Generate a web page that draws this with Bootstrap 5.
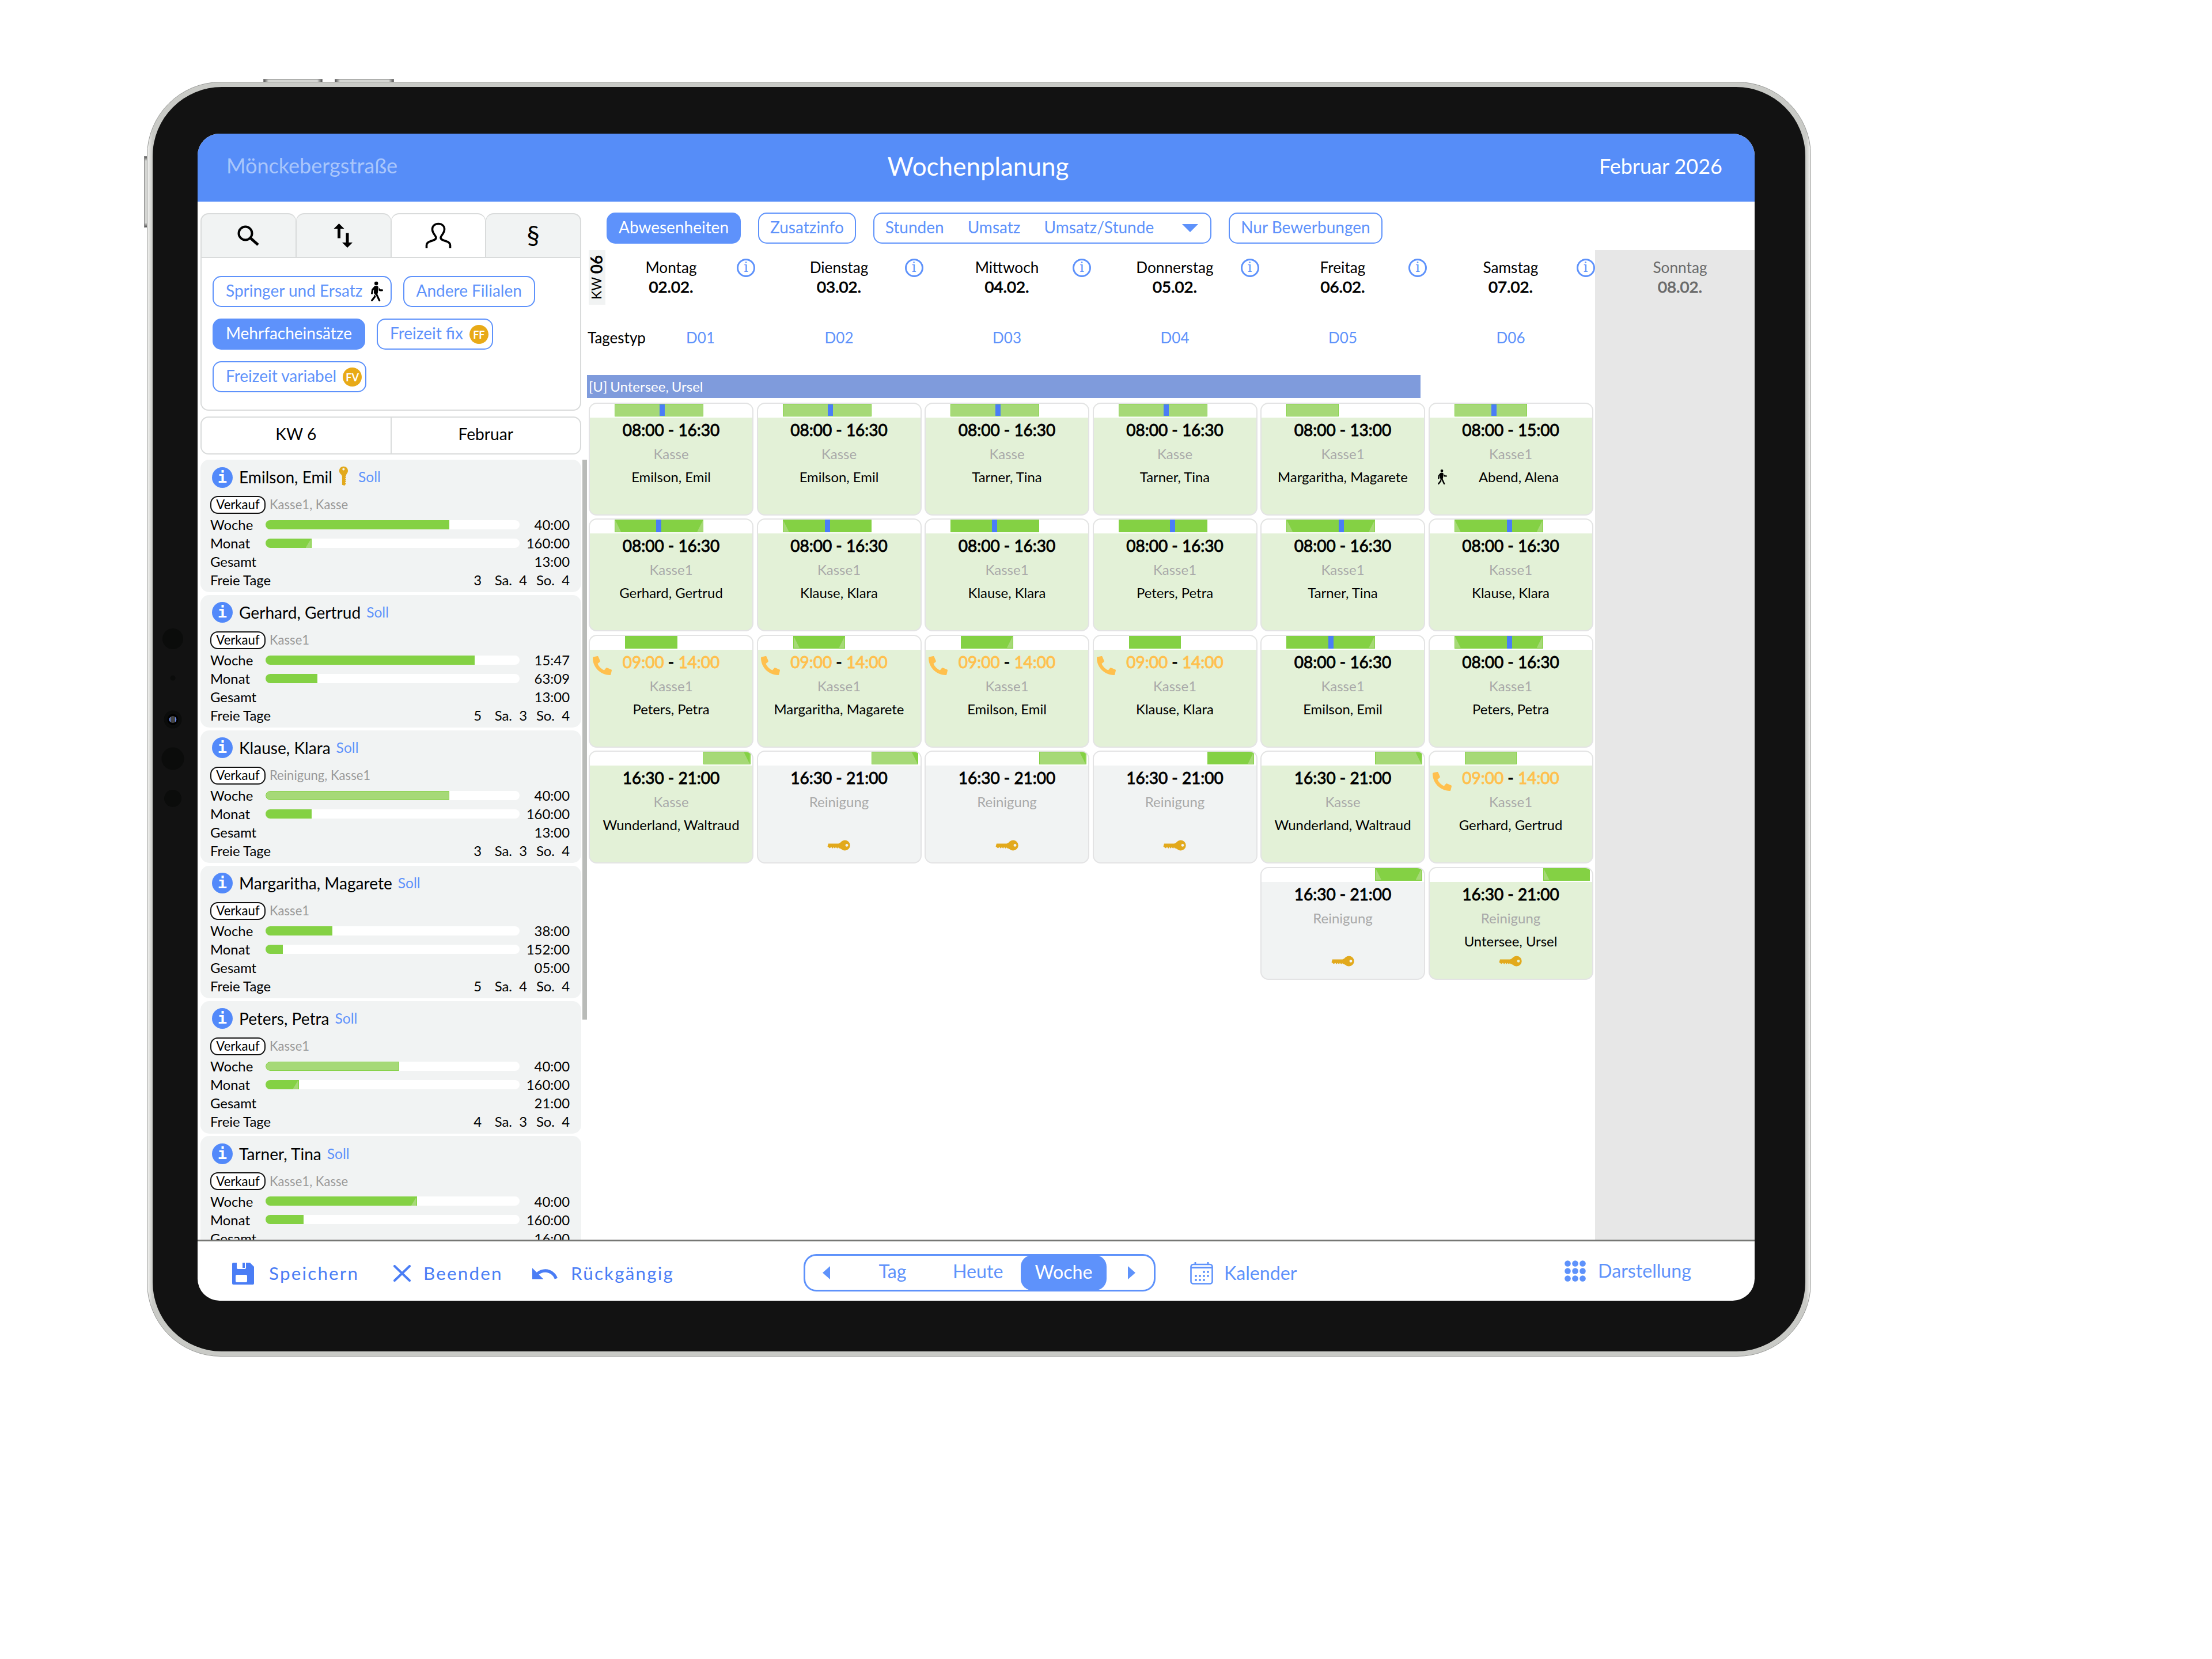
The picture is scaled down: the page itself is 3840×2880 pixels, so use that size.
<!DOCTYPE html>
<html lang="de">
<head>
    <meta charset="UTF-8">
    <meta name="viewport" content="width=device-width, initial-scale=1.0">
    <title>Wochenplanung</title>
    <link rel="stylesheet" href="https://cdn.jsdelivr.net/npm/bootstrap@5.3.0/dist/css/bootstrap.min.css">
    <style>
        :root {
            --blue: #5e92fb;
            --green: #84d144;
            --green-soft: #a6d977;
        }

        body {
            background: #fff;
            color: #000;
            font-family: Lato, "Liberation Sans", sans-serif;
            line-height: 1;
            overflow: hidden;
            padding: 142px 0 0 255px;
        }

        svg { display: block; flex: none; }

        /* Tablet */
        .tablet {
            position: relative;
            width: 2889px;
            height: 2213px;
            padding: 8px 9px;
            border: 1px solid #9a9b99;
            border-radius: 128px;
            background: linear-gradient(90deg, #f2f2f0, #c9cac6 9px, #c9cac6 2879px, #f2f2f0);
        }

        .bezel {
            height: 100%;
            background: #121212;
            border-radius: 120px;
            padding: 81px 88px 88px 78px;
        }

        .hw-btn {
            position: absolute;
            background: linear-gradient(90deg, #555, #d5d6d3 8%, #d5d6d3 92%, #555);
            border: 1px solid #888;
            z-index: -1;
        }
        .hw-top { top: -6px; width: 103px; height: 8px; }
        .hw-side { left: -6px; top: 128px; width: 8px; height: 124px; background: linear-gradient(#555, #d5d6d3 6%, #d5d6d3 94%, #555); }

        .sensors { position: absolute; left: 24px; top: 944px; }

        .screen {
            height: 100%;
            background: #fff;
            border-radius: 38px;
            overflow: hidden;
        }

        /* Header */
        .topbar {
            height: 118px;
            padding: 0 56px 7px 50px;
            background: #568df8;
            color: #fff;
        }
        .topbar > * { flex: 1 1 0; }
        .topbar .branch { font-size: 36.1px; color: #a9c6fb; }
        .topbar .title { font-size: 44px; padding-left: 13px; }
        .topbar .month { font-size: 36px; }

        /* Sidebar */
        .side { width: 676px; padding: 20px 0 0 5px; }
        .side-inner { width: 661px; }

        .tabs { height: 78px; }
        .tabs .tab {
            flex: 1;
            background: #f1f3f3;
            border: 2px solid #d9dbdb;
            border-left-width: 1px;
            border-right-width: 1px;
            border-radius: 14px 14px 0 0;
        }
        .tabs .tab.on { background: #fff; }
        .tabs .tab:first-child { border-left-width: 2px; }
        .tabs .tab:last-child { border-right-width: 2px; }
        .para { font-size: 45px; margin-top: -4px; }

        .filters {
            height: 265px;
            padding: 31px 19px 0;
            border: 2px solid #d9dbdb;
            border-top: 0;
            border-radius: 0 0 14px 14px;
            gap: 20px;
        }

        .pill {
            height: 54px;
            padding: 0 21px 5px;
            border: 2px solid var(--blue);
            border-radius: 15px;
            background: #fff;
            color: var(--blue);
            font-size: 28px;
            line-height: 1;
            white-space: nowrap;
        }
        .pill.on { background: var(--blue); color: #fff; }
        .pill.with-dot { padding-right: 6px; }
        .pill.with-icon { padding-right: 13px; }
        .pill .dot {
            width: 33px;
            height: 33px;
            margin: 6px 0 0 11px;
            border-radius: 50%;
            background: #e8aa17;
            color: #fff;
            font-size: 18px;
            font-weight: 700;
        }

        .period {
            height: 66px;
            margin-top: 10px;
            border: 2px solid #d9dbdb;
            border-radius: 14px;
            font-size: 28.2px;
        }
        .period > div { flex: 1; padding-bottom: 6px; }
        .period > div + div { border-left: 2px solid #d9dbdb; }

        .staff { height: 1354px; margin-top: 9px; overflow: hidden; }
        .person {
            flex: none;
            height: 230.4px;
            margin-bottom: 4.5px;
            padding: 11px 20px 0 17px;
            background: #f1f3f3;
            border-radius: 15px;
            font-size: 23.9px;
        }
        .info {
            width: 36px;
            height: 36px;
            margin-left: 3px;
            border-radius: 50%;
            background: #5289fa;
            color: #fff;
            font: 700 27px/36px "DejaVu Sans Mono", monospace;
            text-align: center;
        }
        .who { height: 39px; }
        .who .nm { font-size: 28.1px; margin-left: 11px; }
        .who .soll { font-size: 24.6px; color: var(--blue); margin-left: 10px; }
        .skills { height: 31px; margin-top: 13px; font-size: 22.1px; color: #999; }
        .skills .dept {
            width: 96px;
            height: 31px;
            margin-right: 7px;
            border: 2px solid #111;
            border-radius: 13px;
            background: #fff;
            color: #000;
        }
        .line { height: 32px; }
        .line .lbl { width: 95.5px; }
        .line .progress { width: 441px; height: 16px; border-radius: 8px; background: #fff; }
        .line .progress-bar { background: var(--green); position: relative; }
        .progress-bar.soft { background: var(--green-soft); border: 1px solid var(--green); border-radius: 8px 0 0 8px; }
        .progress-bar.cut::after {
            content: "";
            position: absolute;
            right: 1px;
            top: 1px;
            width: 9px;
            height: 15px;
            background: var(--green-soft);
            clip-path: polygon(100% 0, 100% 100%, 0 100%);
        }
        .free span { text-align: right; }

        .thumb { width: 8px; height: 972px; margin: 428px 0 0 2px; background: #b9bbb8; }

        /* Week */
        .tools { height: 84px; padding: 19px 0 0 34px; gap: 30px; }
        .tools .pill { padding-left: 19px; padding-right: 19px; }
        .tools .group { gap: 41px; padding-right: 21px; }

        .week { padding-left: 3px; width: 1750px; }
        .days {
            display: grid;
            grid-template-columns: repeat(6, 286px);
            column-gap: 5.5px;
        }
        .day { position: relative; height: 111px; padding-top: 13px; text-align: center; font-size: 26.2px; line-height: 34px; }
        .day b { font-size: 27.600px; }
        .day b, .time { font-weight: 400; -webkit-text-stroke: 0.9px currentColor; }
        .day .ring {
            position: absolute;
            right: -3px;
            top: 15px;
            width: 32px;
            height: 32px;
            border: 3px solid var(--blue);
            border-radius: 50%;
            color: var(--blue);
            font: 24px/25px "DejaVu Serif", serif;
        }
        .kw {
            position: absolute;
            left: 0;
            top: 0;
            width: 29px;
            height: 95px;
            background: #f1f3f3;
            writing-mode: vertical-rl;
            transform: rotate(180deg);
            text-align: center;
            font-size: 23px;
            line-height: 27px;
        }
        .kw b { font-size: 28px; font-weight: 700; -webkit-text-stroke: 0; }

        .types { height: 82px; font-size: 26px; color: var(--blue); }
        .types .first { padding-right: 67px; margin-left: -2px; }
        .absence {
            width: 1447px;
            height: 40px;
            margin: 24px 0 8px -3px;
            padding: 0 0 1px 3px;
            background: #7f9bdc;
            color: #fff;
            font-size: 24px;
            word-spacing: -1.2px;
        }
        .shifts { row-gap: 5.4px; }
        .shift {
            position: relative;
            height: 196px;
            border: 2px solid #e3e3e4;
            border-radius: 14px;
            background: #f1f3f3;
            overflow: hidden;
            text-align: center;
        }
        .shift.set { background: #e3f1d7; }
        .strip { height: 24px; background: #fff; }
        .span { position: relative; height: 22px; background: var(--green); }
        .span.soft { background: var(--green-soft); border: 1px solid var(--green); }
        .span.cut-l::before, .span.cut-r::after {
            content: "";
            position: absolute;
            top: 1px;
            bottom: 1px;
            width: 10px;
            background: var(--green-soft);
        }
        .span.cut-l::before { left: 1px; clip-path: polygon(0 0, 100% 100%, 0 100%); }
        .span.cut-r::after { right: 1px; clip-path: polygon(100% 0, 100% 100%, 0 100%); }
        .span.soft.cut-r::after { background: var(--green); right: 0; top: 0; bottom: 0; clip-path: polygon(0 0, 100% 0, 100% 100%); }
        .pause { position: absolute; top: 0; bottom: 0; width: 9px; background: #4a7df7; }

        .time { height: 42px; line-height: 42px; font-size: 28px; }
        .time .open { color: #ffc04d; }
        .role { height: 41px; line-height: 41px; font-size: 24px; color: #a9a9a9; }
        .emp { height: 40px; line-height: 40px; font-size: 23.9px; }
        .keyline { height: 30px; }
        .phone { position: absolute; left: 5px; top: 35px; }

        .sunday { background: #e7e7e7; color: #6a6a6a; width: 278px; flex: none; }
        .sunday .day { padding-left: 17px; }

        /* Footer */
        .bottombar { height: 106px; border-top: 3px solid #767774; color: var(--blue); font-size: 32.2px; }
        .bottombar .act { color: #4a7df5; letter-spacing: 2.2px; font-size: 31.4px; }
        .bottombar .act span { padding-top: 9px; }
        .nav-group { width: 611px; height: 65px; margin-top: 6px; border: 3px solid var(--blue); border-radius: 22px; }
        .nav-group .now { width: 149px; height: 61px; padding-bottom: 3px; background: var(--blue); color: #fff; border-radius: 20px; margin: -1px 0; }
    </style>
</head>
<body>

    <div class="tablet">
        <div class="hw-btn hw-top" style="left: 201px"></div>
        <div class="hw-btn hw-top" style="left: 325px"></div>
        <div class="hw-btn hw-side"></div>
        <svg class="sensors" width="40" height="320" viewBox="0 0 40 320">
            <g fill="#0b0c0b">
                <circle cx="20" cy="22" r="18"/><circle cx="20" cy="90" r="4.5"/><circle cx="20" cy="162" r="15.5"/>
                <circle cx="20" cy="230" r="19.5"/><circle cx="20" cy="299" r="15"/>
            </g>
            <circle cx="20" cy="162" r="9.5" fill="#000"/>
            <circle cx="20" cy="162" r="6" fill="#444"/>
            <path d="M16 157.500 a5.500 5.500 0 0 0 0 9z M24 157.500 a5.500 5.500 0 0 1 0 9z" fill="#6b8df0"/>
        </svg>
        <div class="bezel">
            <div class="screen d-flex flex-column">

                <!-- Header -->
                <header class="topbar d-flex align-items-center">
                    <div class="branch">Mönckebergstraße</div>
                    <div class="title text-center">Wochenplanung</div>
                    <div class="month text-end">Februar 2026</div>
                </header>

                <main class="d-flex flex-grow-1 overflow-hidden">
                    <!-- Sidebar -->
                    <aside class="side d-flex flex-shrink-0">
                        <div class="side-inner">
                            <div class="tabs d-flex">
                                <div class="tab d-flex align-items-center justify-content-center">
                                    <svg width="38" height="36" viewBox="0 0 38 36" fill="none" stroke="#000"><circle cx="14" cy="14" r="11.500" stroke-width="4"/><path d="M22.500 22 36 34" stroke-width="5"/></svg>
                                </div>
                                <div class="tab d-flex align-items-center justify-content-center">
                                    <svg width="34" height="42" viewBox="0 0 34 42"><path d="M9.500 0 18.500 9H12v16.500H7V9H.500z M24 42 15 33h6.500V16.500h5V33H33z"/></svg>
                                </div>
                                <div class="tab on d-flex align-items-center justify-content-center">
                                    <svg width="46" height="46" viewBox="0 0 46 46" fill="none" stroke="#000" stroke-width="3.600"><path d="M2.500 45v-5c0-4.500 3-6 7-7.200 6-1.800 9.500-3 9.500-6.300 0-3.500-6.500-7-6.500-14.500C12.500 6 17 2.500 23 2.500S33.500 6 33.500 12c0 7.500-6.500 11-6.500 14.500 0 3.300 3.500 4.500 9.500 6.300 4 1.200 7 2.700 7 7.200v5"/></svg>
                                </div>
                                <div class="tab d-flex align-items-center justify-content-center"><span class="para">§</span></div>
                            </div>
                            <div class="filters d-flex flex-wrap align-content-start">
                                <div class="pill with-icon d-flex align-items-center">Springer und Ersatz
                                    <svg class="mt-1" style="margin-left: 14px" width="21" height="36" viewBox="3.700 0 9.800 16"><use href="#walk"/></svg>
                                </div>
                                <div class="pill d-flex align-items-center">Andere Filialen</div>
                                <div class="pill on d-flex align-items-center">Mehrfacheinsätze</div>
                                <div class="pill with-dot d-flex align-items-center">Freizeit fix <span class="dot d-flex align-items-center justify-content-center">FF</span></div>
                                <div class="pill with-dot d-flex align-items-center">Freizeit variabel <span class="dot d-flex align-items-center justify-content-center">FV</span></div>
                            </div>
                            <div class="period d-flex text-center">
                                <div class="d-flex align-items-center justify-content-center">KW 6</div>
                                <div class="d-flex align-items-center justify-content-center">Februar</div>
                            </div>
                            <div class="staff d-flex flex-column" id="staff"></div>
                        </div>
                        <div class="thumb"></div>
                    </aside>

                    <!-- Week -->
                    <section class="flex-grow-1 d-flex flex-column">
                        <div class="tools d-flex align-items-start">
                            <div class="pill on d-flex align-items-center">Abwesenheiten</div>
                            <div class="pill d-flex align-items-center">Zusatzinfo</div>
                            <div class="pill group d-flex align-items-center">
                                <span>Stunden</span><span>Umsatz</span><span>Umsatz/Stunde</span>
                                <svg class="mt-1 ms-2" width="28" height="14" viewBox="0 0 28 14"><path d="M0 0h28L14 14z" fill="#5e92fb"/></svg>
                            </div>
                            <div class="pill d-flex align-items-center">Nur Bewerbungen</div>
                        </div>
                        <div class="d-flex flex-grow-1">
                            <div class="week flex-shrink-0">
                                <div class="days" id="days"></div>
                                <div class="days types align-items-center text-center" id="types"></div>
                                <div class="absence d-flex align-items-center">[U] Untersee, Ursel</div>
                                <div class="days shifts" id="shifts"></div>
                            </div>
                            <div class="sunday"><div class="day">Sonntag<br><b>08.02.</b></div></div>
                        </div>
                    </section>
                </main>

                <!-- Footer -->
                <footer class="bottombar d-flex align-items-center flex-shrink-0">
                    <div class="act d-flex align-items-center" style="margin-left: 60px; width: 992px">
                        <svg class="mt-2" width="38" height="38" viewBox="0 0 38 38"><path fill-rule="evenodd" fill="#4a7df5" d="M2 0H8V9q0 2 2 2H22q2 0 2-2V0H31L38 7V36q0 2-2 2H2q-2 0-2-2V2Q0 0 2 0zM18 0h4v9h-4zM8 21q-2 0-2 2v9q0 2 2 2H24q2 0 2-2V23q0-2-2-2z"/></svg>
                        <span style="margin-left: 26px; width: 216px">Speichern</span>
                        <svg class="mt-2" width="30" height="29" viewBox="0 0 30 29" stroke="#4a7df5" stroke-width="4" stroke-linecap="round"><path d="M2 2 28 27M28 2 2 27"/></svg>
                        <span style="margin-left: 22px; width: 189px">Beenden</span>
                        <svg class="mt-2" width="44" height="20" viewBox="2 7 20.500 9.200"><path fill="#4a7df5" d="M12.500 8c-2.650 0-5.050.990-6.900 2.600L2 7v9h9l-3.620-3.620c1.390-1.160 3.160-1.880 5.120-1.880 3.540 0 6.550 2.310 7.600 5.500l2.370-.780C21.080 11.030 17.150 8 12.500 8z"/></svg>
                        <span style="margin-left: 23px">Rückgängig</span>
                    </div>
                    <div class="nav-group d-flex align-items-center">
                        <svg style="margin-left: 30px" width="13" height="23" viewBox="0 0 13 23"><path d="M13 0v23L0 11.500z" fill="#5e92fb"/></svg>
                        <span class="text-center pb-1" style="width: 213px; padding-left: 4px">Tag</span>
                        <span class="pb-1" style="width: 118px">Heute</span>
                        <span class="now d-flex align-items-center justify-content-center">Woche</span>
                        <svg style="margin-left: 37px" width="13" height="23" viewBox="0 0 13 23"><path d="M0 0v23l13-11.500z" fill="#5e92fb"/></svg>
                    </div>
                    <svg class="mt-2" style="margin-left: 60px" width="40" height="39" viewBox="0 0 40 39" fill="none" stroke="#5e92fb" stroke-width="2.600">
                        <rect x="1.500" y="4" width="37" height="33.500" rx="4"/><path d="M1.500 9.500h37M9 0v5M31 0v5" stroke-width="2.800"/>
                        <g stroke-width="4" stroke-linecap="round"><path d="M24 17h.010M31 17h.010M10 24h.010M17 24h.010M24 24h.010M31 24h.010M10 31h.010M17 31h.010M24 31h.010"/></g>
                    </svg>
                    <span style="margin-left: 19px; padding-top: 8px">Kalender</span>
                    <svg class="ms-auto" width="37" height="37" viewBox="0 0 37 37" fill="#5e92fb">
                        <circle cx="5.500" cy="5.500" r="5.300"/><circle cx="18.500" cy="5.500" r="5.300"/><circle cx="31.500" cy="5.500" r="5.300"/>
                        <circle cx="5.500" cy="18.500" r="5.300"/><circle cx="18.500" cy="18.500" r="5.300"/><circle cx="31.500" cy="18.500" r="5.300"/>
                        <circle cx="5.500" cy="31.500" r="5.300"/><circle cx="18.500" cy="31.500" r="5.300"/><circle cx="31.500" cy="31.500" r="5.300"/>
                    </svg>
                    <span style="margin: 0 110px 0 21px">Darstellung</span>
                </footer>
            </div>
        </div>
    </div>

    <!-- Shared symbols -->
    <svg width="0" height="0" class="position-absolute">
        <g id="walk"><path d="M9.500 1.500a1.500 1.500 0 1 1-3 0 1.500 1.500 0 0 1 3 0M6.440 3.752A.750.750 0 0 1 7 3.500h1.445c.742 0 1.320.643 1.243 1.380l-.430 4.083a1.800 1.800 0 0 1-.088.395l-.318.906.213.242a.8.8 0 0 1 .114.175l2 4.250a.750.750 0 1 1-1.357.638l-1.956-4.154-1.680-1.921A.750.750 0 0 1 6 8.960l.138-2.613-.435.489-.464 2.786a.750.750 0 1 1-1.480-.246l.5-3a.750.750 0 0 1 .180-.375l2-2.250z"/><path d="M6.250 11.745v-1.418l1.204 1.375.261.524a.8.8 0 0 1-.120.231l-2.500 3.250a.750.750 0 1 1-1.190-.914zM10.470 7.530l-.494-.494.205-1.843.006-.067 1.124 1.124h1.440a.750.750 0 0 1 0 1.500H11a.750.750 0 0 1-.531-.220z"/></g>
        <path id="key" fill="#e2a91c" fill-rule="evenodd" d="M1.500 6.500H19Q22 6 24 3A9 9 0 1 1 24 16Q22 14.500 20 14.500L18.500 13 17 15 14.500 12.500 13 15 10.500 12.500 9 15 6.500 12.500 4 14.500 0 11.500zM33.500 7a2.400 2.400 0 1 0 .010 0z"/>
        <path id="call" fill="#ffc04d" d="M497.390 361.800l-112-48a24 24 0 0 0-28 6.900l-49.600 60.600A370.660 370.660 0 0 1 130.600 204.110l60.600-49.600a23.940 23.940 0 0 0 6.900-28l-48-112A24.160 24.160 0 0 0 122.600.610l-104 24A24 24 0 0 0 0 48c0 256.500 207.900 464 464 464a24 24 0 0 0 23.400-18.600l24-104a24.290 24.290 0 0 0-14.010-27.600z"/>
    </svg>

    <script src="https://cdn.jsdelivr.net/npm/bootstrap@5.3.0/dist/js/bootstrap.bundle.min.js"></script>
    <script>
        const days = [
            ["Montag", "02.02."], ["Dienstag", "03.02."], ["Mittwoch", "04.02."],
            ["Donnerstag", "05.02."], ["Freitag", "06.02."], ["Samstag", "07.02."]
        ];

        // bars: [filled px of 441, extra classes]
        const staff = [
            { name: "Emilson, Emil", key: true, skills: "Kasse1, Kasse", week: [319, ""], month: [80, "cut"], hours: ["40:00", "160:00", "13:00"], free: [3, 4, 4] },
            { name: "Gerhard, Gertrud", skills: "Kasse1", week: [363, ""], month: [90, ""], hours: ["15:47", "63:09", "13:00"], free: [5, 3, 4] },
            { name: "Klause, Klara", skills: "Reinigung, Kasse1", week: [319, "soft"], month: [80, ""], hours: ["40:00", "160:00", "13:00"], free: [3, 3, 4] },
            { name: "Margaritha, Magarete", skills: "Kasse1", week: [116, ""], month: [30, ""], hours: ["38:00", "152:00", "05:00"], free: [5, 4, 4] },
            { name: "Peters, Petra", skills: "Kasse1", week: [232, "soft"], month: [58, "cut"], hours: ["40:00", "160:00", "21:00"], free: [4, 3, 4] },
            { name: "Tarner, Tina", skills: "Kasse1, Kasse", week: [263, "cut"], month: [66, ""], hours: ["40:00", "160:00", "16:00"] }
        ];

        // [from, to, role, employee, bar classes, pause px, flag]
        const shifts = [
            ["08:00", "16:30", "Kasse", "Emilson, Emil", "soft", 122],
            ["08:00", "16:30", "Kasse", "Emilson, Emil", "soft", 122],
            ["08:00", "16:30", "Kasse", "Tarner, Tina", "soft", 122],
            ["08:00", "16:30", "Kasse", "Tarner, Tina", "soft", 122],
            ["08:00", "13:00", "Kasse1", "Margaritha, Magarete", "soft"],
            ["08:00", "15:00", "Kasse1", "Abend, Alena", "soft", 108, "walk"],

            ["08:00", "16:30", "Kasse1", "Gerhard, Gertrud", "cut-l cut-r", 117],
            ["08:00", "16:30", "Kasse1", "Klause, Klara", "cut-l", 118],
            ["08:00", "16:30", "Kasse1", "Klause, Klara", "", 117],
            ["08:00", "16:30", "Kasse1", "Peters, Petra", "", 134],
            ["08:00", "16:30", "Kasse1", "Tarner, Tina", "cut-l cut-r", 136],
            ["08:00", "16:30", "Kasse1", "Klause, Klara", "cut-l cut-r", 136],

            ["09:00", "14:00", "Kasse1", "Peters, Petra", "", 0, "call"],
            ["09:00", "14:00", "Kasse1", "Margaritha, Magarete", "cut-l cut-r", 0, "call"],
            ["09:00", "14:00", "Kasse1", "Emilson, Emil", "cut-r", 0, "call"],
            ["09:00", "14:00", "Kasse1", "Klause, Klara", "", 0, "call"],
            ["08:00", "16:30", "Kasse1", "Emilson, Emil", "cut-r", 118],
            ["08:00", "16:30", "Kasse1", "Peters, Petra", "cut-l cut-r", 136],

            ["16:30", "21:00", "Kasse", "Wunderland, Waltraud", "soft cut-r"],
            ["16:30", "21:00", "Reinigung", "", "soft cut-r", 0, "key"],
            ["16:30", "21:00", "Reinigung", "", "soft cut-r", 0, "key"],
            ["16:30", "21:00", "Reinigung", "", "cut-r", 0, "key"],
            ["16:30", "21:00", "Kasse", "Wunderland, Waltraud", "soft cut-r"],
            ["09:00", "14:00", "Kasse1", "Gerhard, Gertrud", "soft", 0, "call"],

            null, null, null, null,
            ["16:30", "21:00", "Reinigung", "", "cut-l cut-r", 0, "key"],
            ["16:30", "21:00", "Reinigung", "Untersee, Ursel", "cut-l", 0, "key"]
        ];

        const HOUR = 18.1;

        function hours(t) {
            const [h, m] = t.split(":").map(Number);
            return h + m / 60;
        }

        function progress(label, bar, value) {
            return `<div class="line d-flex align-items-center">
                <span class="lbl">${label}</span>
                <div class="progress"><div class="progress-bar ${bar[1]}" style="width: ${bar[0]}px"></div></div>
                <span class="ms-auto">${value}</span>
            </div>`;
        }

        function freeDays(f) {
            if (!f) return "";
            return `<div class="line free d-flex align-items-center"><span>Freie Tage</span>
                <span class="ms-auto">${f[0]}</span><span style="width: 53px">Sa.</span><span style="width: 26px">${f[1]}</span>
                <span style="width: 48px">So.</span><span style="width: 26px">${f[2]}</span></div>`;
        }

        function personCard(p) {
            const key = p.key ? `<svg style="margin: -5px 7px 0 10px" width="18" height="34" viewBox="0 0 18 40"><use href="#key" transform="rotate(-90) translate(-40 0)"/></svg>` : "";
            return `<div class="person">
                <div class="who d-flex align-items-center">
                    <div class="info">i</div><span class="nm">${p.name}</span>${key}<span class="soll">Soll</span>
                </div>
                <div class="skills d-flex align-items-center">
                    <span class="dept d-flex align-items-center justify-content-center">Verkauf</span>${p.skills}
                </div>
                <div style="margin-top: 3px">
                    ${progress("Woche", p.week, p.hours[0])}
                    ${progress("Monat", p.month, p.hours[1])}
                    <div class="line d-flex align-items-center justify-content-between"><span>Gesamt</span><span>${p.hours[2]}</span></div>
                    ${freeDays(p.free)}
                </div>
            </div>`;
        }

        function shiftCard(s) {
            if (!s) return "<div></div>";
            const [from, to, role, emp, bar, pause, flag] = s;
            const left = (hours(from) - 5.5) * HOUR - 2;
            const width = (hours(to) - hours(from)) * HOUR;
            const open = flag === "call" ? "open" : "";
            return `<div class="shift ${emp ? "set" : ""}">
                <div class="strip"><div class="span ${bar}" style="margin-left: ${left}px; width: ${width}px">
                    ${pause ? `<div class="pause" style="left: ${pause - left - 2}px"></div>` : ""}</div></div>
                ${open ? `<svg class="phone" width="33" height="33" viewBox="0 0 512 512"><use href="#call"/></svg>` : ""}
                <div class="time"><span class="${open}">${from}</span> - <span class="${open}">${to}</span></div>
                <div class="role">${role}</div>
                <div class="emp d-flex align-items-center justify-content-center">${flag === "walk" ? `<svg style="margin: 0 55px 0 -43px" width="16" height="26" viewBox="3.700 0 9.800 16"><use href="#walk"/></svg>` : ""}${emp}</div>
                <div class="keyline d-flex align-items-center justify-content-center">${flag === "key" ? `<svg width="41" height="19" viewBox="0 0 40 19"><use href="#key"/></svg>` : ""}</div>
            </div>`;
        }

        document.getElementById("staff").innerHTML = staff.map(personCard).join("");
        document.getElementById("days").innerHTML = days.map((d, i) => `<div class="day">
            ${i === 0 ? `<div class="kw">KW <b>06</b></div>` : ""}${d[0]}<br><b>${d[1]}</b><span class="ring">i</span></div>`).join("");
        document.getElementById("types").innerHTML = days.map((d, i) => i === 0
            ? `<div class="first d-flex justify-content-between"><span class="text-black">Tagestyp</span><span>D01</span></div>`
            : `<div>D0${i + 1}</div>`).join("");
        document.getElementById("shifts").innerHTML = shifts.map(shiftCard).join("");
    </script>

</body>
</html>
